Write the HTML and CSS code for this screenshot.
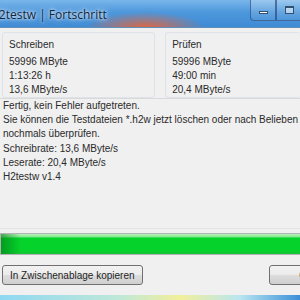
FILE: index.html
```html
<!DOCTYPE html>
<html lang="de">
<head>
    <meta charset="UTF-8">
    <title>H2testw | Fortschritt</title>
    <link rel="stylesheet" href="styles.css">
</head>
<body>

    <!-- Title bar -->
    <div class="titlebar">
        <span class="title">H2testw | Fortschritt</span>
        <div class="controls">
            <span class="ctl ctl-min"><i></i></span>
            <span class="ctl ctl-max"><i></i></span>
        </div>
    </div>

    <!-- Dialog -->
    <div class="dialog">
        <div class="groups">
            <div class="group">
                <div class="legend">Schreiben</div>
                <div class="row">59996 MByte</div>
                <div class="row">1:13:26 h</div>
                <div class="row">13,6 MByte/s</div>
            </div>
            <div class="group">
                <div class="legend">Prüfen</div>
                <div class="row">59996 MByte</div>
                <div class="row">49:00 min</div>
                <div class="row">20,4 MByte/s</div>
            </div>
        </div>

        <div class="log">
            Fertig, kein Fehler aufgetreten.<br>
            Sie können die Testdateien *.h2w jetzt löschen oder nach Belieben<br>
            nochmals überprüfen.<br>
            Schreibrate: 13,6 MByte/s<br>
            Leserate: 20,4 MByte/s<br>
            H2testw v1.4
        </div>

        <div class="progress"><div class="bar"></div></div>

        <div class="buttons">
            <button class="btn">In Zwischenablage kopieren</button>
            <button class="btn btn-ok">OK</button>
        </div>
    </div>

    <div class="frame-bottom"></div>

</body>
</html>
```

FILE: styles.css
```css
/* General Reset */
* {
    margin: 0;
    padding: 0;
    box-sizing: border-box;
}

body {
    width: 300px;
    height: 300px;
    overflow: hidden;
    font-family: "Liberation Sans", Arial, sans-serif;
    font-size: 10px;
    color: #2a2a2a;
    background: #f0f0f0;
    display: flex;
    flex-direction: column;
}

/* Title bar */
.titlebar {
    height: 28px;
    display: flex;
    justify-content: space-between;
    align-items: flex-start;
    background:
        radial-gradient(ellipse 60px 16px at 145px 28px, rgba(236, 100, 52, 0.95), rgba(236, 100, 52, 0) 100%),
        linear-gradient(#79b6ea, #4d97dc 45%, #3f8bd4);
    border-bottom: 1px solid #5f8fb8;
}

.title {
    margin: 6px 0 0 -10px;
    font-family: "Open Sans", sans-serif;
    font-size: 12px;
    color: #10263c;
    white-space: nowrap;
    text-shadow: 0 0 6px rgba(255, 255, 255, 0.9), 0 0 3px rgba(255, 255, 255, 0.9);
}

.controls {
    display: flex;
    margin-right: -2px;
}

.ctl {
    width: 26px;
    height: 21px;
    border: 1px solid rgba(30, 60, 110, 0.6);
    border-top: none;
    background: linear-gradient(rgba(255, 255, 255, 0.25), rgba(255, 255, 255, 0.05));
    display: flex;
    justify-content: center;
    align-items: center;
}

.ctl-min {
    border-radius: 0 0 0 4px;
}

.ctl-min i {
    width: 9px;
    height: 3px;
    margin-top: 4px;
    background: #fff;
    border: 1px solid #33506e;
}

.ctl-max i {
    width: 9px;
    height: 8px;
    border: 1px solid #33506e;
    border-top-width: 2px;
    background: rgba(255, 255, 255, 0.5);
}

/* Dialog body */
.dialog {
    flex: 1;
    padding: 4px 0 0 2px;
    display: flex;
    flex-direction: column;
}

.groups {
    display: flex;
    gap: 10px;
}

.group {
    width: 159px;
    padding: 6px 0 0 6px;
    border: 1px solid #dde3e8;
    border-radius: 3px;
}

.group + .group {
    width: 140px;
    border-right: none;
}

.legend {
    margin-bottom: 5px;
}

.row {
    line-height: 14px;
}

/* Result text */
.log {
    margin: 0 0 0 -2px;
    padding: 0 3px;
    height: 131px;
    line-height: 14.2px;
    border-top: 1px solid #d9d9d9;
    border-bottom: 1px solid #e4e4e4;
    white-space: nowrap;
    overflow: hidden;
}

/* Progress bar */
.progress {
    margin: 4px 0 0 -2px;
    height: 22px;
    border: 1px solid #b2b2b2;
    border-right: none;
    background: #e6e6e6;
}

.bar {
    height: 100%;
    background:
        linear-gradient(90deg, rgba(0, 120, 20, 0.6), rgba(0, 120, 20, 0) 20px),
        linear-gradient(#b9f5bd, #7fe88a 3px, #06d22c 4px, #06d22c 17px, #18c43a);
}

/* Buttons */
.buttons {
    display: flex;
    justify-content: space-between;
    margin-top: 10px;
}

.btn {
    height: 20px;
    padding: 0 7px;
    font-family: "Liberation Sans", Arial, sans-serif;
    font-size: 10px;
    color: #1e1e1e;
    border: 1px solid #707070;
    border-radius: 3px;
    background: linear-gradient(#f2f2f2 0%, #ebebeb 50%, #dddddd 51%, #cfcfcf 100%);
}

.btn-ok {
    width: 75px;
    margin-right: -44px;
}

.frame-bottom {
    height: 5px;
    background: linear-gradient(90deg, #8fd8f2, #bfe8d8 40%, #f2ef9a 60%, #b8e6f0 80%, #3b8fd8);
}
```
